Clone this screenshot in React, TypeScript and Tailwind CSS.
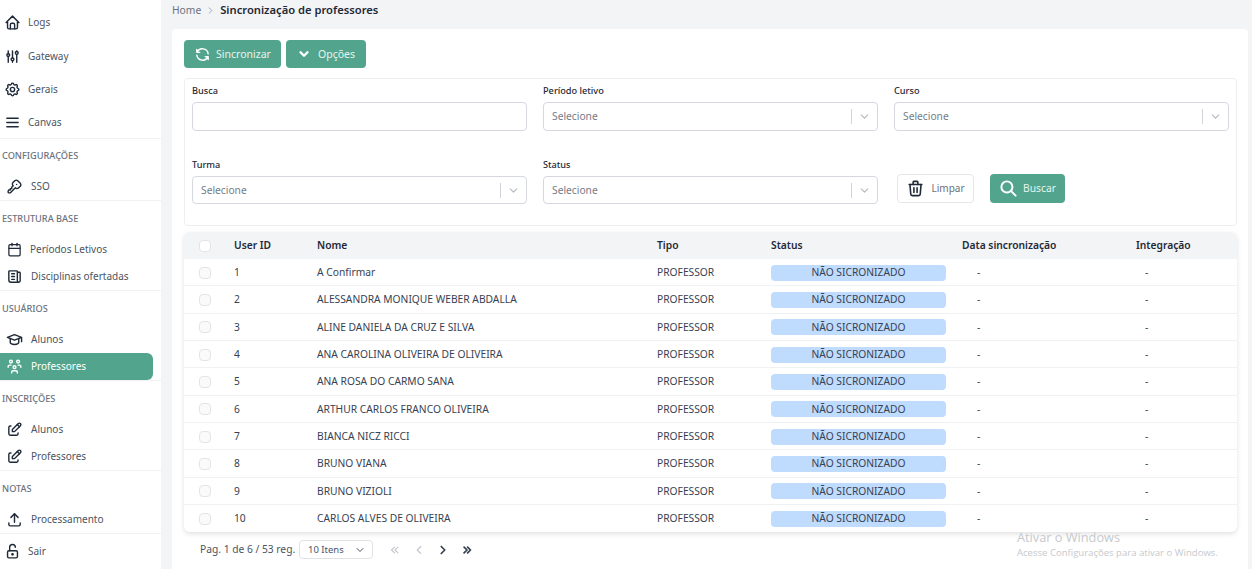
import { ReactNode } from 'react';
import { Calendar } from 'lucide-react';
import {
  TbAdjustments,
  TbChevronDown,
  TbChevronLeft,
  TbChevronRight,
  TbChevronsLeft,
  TbChevronsRight,
  TbEdit,
  TbHome,
  TbKey,
  TbLockOpen,
  TbMenu2,
  TbNews,
  TbRefresh,
  TbSchool,
  TbSearch,
  TbSettings,
  TbTrash,
  TbUpload,
  TbUsersGroup,
} from 'react-icons/tb';

const rows = [
  'A Confirmar',
  'ALESSANDRA MONIQUE WEBER ABDALLA',
  'ALINE DANIELA DA CRUZ E SILVA',
  'ANA CAROLINA OLIVEIRA DE OLIVEIRA',
  'ANA ROSA DO CARMO SANA',
  'ARTHUR CARLOS FRANCO OLIVEIRA',
  'BIANCA NICZ RICCI',
  'BRUNO VIANA',
  'BRUNO VIZIOLI',
  'CARLOS ALVES DE OLIVEIRA',
];

const SideItem = ({ icon, label, active }: { icon: ReactNode; label: string; active?: boolean }) => (
  <div
    className={`flex h-[27px] w-[153px] items-center gap-[8px] rounded-r-md pl-[6px] text-[10px] ${
      active ? 'bg-[#52a58c] text-white' : 'text-[#4b5563]'
    }`}
  >
    <span className={`text-[17px] ${active ? 'text-white' : 'text-[#1f2937]'}`}>{icon}</span>
    {label}
  </div>
);

const TopItem = ({ icon, label, className = 'h-[33.4px]' }: { icon: ReactNode; label: string; className?: string }) => (
  <div className={`flex items-center gap-[7px] pl-[4px] text-[10px] text-[#4b5563] ${className}`}>
    <span className="text-[17px] text-[#1f2937]">{icon}</span>
    {label}
  </div>
);

const Section = ({ title, children, titleH = 'h-[35px]' }: { title: string; children: ReactNode; titleH?: string }) => (
  <div className="border-b border-[#f0f1f3]">
    <div className={`flex ${titleH} items-center pl-[2px] text-[9.2px] font-medium text-[#6b7280]`}>{title}</div>
    {children}
  </div>
);

const Field = ({ label, children, className = '' }: { label: string; children: ReactNode; className?: string }) => (
  <div className={className}>
    <div className="mb-[8px] flex h-[7px] items-center text-[9.2px] font-medium text-[#1f2937]">{label}</div>
    {children}
  </div>
);

const SelectBox = ({ h = 'h-[29px]' }: { h?: string }) => (
  <div className={`flex ${h} items-center rounded border border-[#d5d8de] bg-white pl-[8px] text-[10.25px] text-[#757c88]`}>
    <span className="flex-1 pt-px">Selecione</span>
    <span className="h-[15px] w-px bg-[#d1d5db]" />
    <TbChevronDown className="mx-[6px] text-[13px] text-[#b3b7bf]" />
  </div>
);

const GRID = 'grid grid-cols-[50px_83px_340px_114px_191px_174px_1fr] items-center';

const CheckCell = ({ white }: { white?: boolean }) => (
  <div className="pl-[15px]">
    <div className={`h-[12px] w-[12px] rounded-sm border border-[#e2e4e8] ${white ? 'bg-white' : 'bg-[#fafafa]'}`} />
  </div>
);

export default function App() {
  return (
    <div className="relative flex h-[569px] w-[1252px] overflow-hidden bg-[#f3f4f6] font-['Noto_Sans',sans-serif]">
      <aside className="h-full w-[161px] shrink-0 bg-white">
        <div className="border-b border-[#f0f1f3] pt-[6px]">
          <TopItem icon={<TbHome />} label="Logs" />
          <TopItem icon={<TbAdjustments />} label="Gateway" />
          <TopItem icon={<TbSettings />} label="Gerais" />
          <TopItem icon={<TbMenu2 />} label="Canvas" className="h-[31.8px]" />
        </div>
        <Section title="CONFIGURAÇÕES" titleH="h-[34px]">
          <SideItem icon={<TbKey />} label="SSO" />
        </Section>
        <Section title="ESTRUTURA BASE">
          <SideItem icon={<Calendar size={15} strokeWidth={2} className="ml-px" />} label="Períodos Letivos" />
          <SideItem icon={<TbNews />} label="Disciplinas ofertadas" />
        </Section>
        <Section title="USUÁRIOS">
          <SideItem icon={<TbSchool />} label="Alunos" />
          <SideItem icon={<TbUsersGroup />} label="Professores" active />
        </Section>
        <Section title="INSCRIÇÕES">
          <SideItem icon={<TbEdit />} label="Alunos" />
          <SideItem icon={<TbEdit />} label="Professores" />
        </Section>
        <Section title="NOTAS">
          <SideItem icon={<TbUpload />} label="Processamento" />
        </Section>
        <TopItem icon={<TbLockOpen />} label="Sair" className="h-[35px]" />
      </aside>

      <main className="flex min-w-0 flex-1 flex-col pl-[11px] pr-[4px]">
        <div className="flex h-[29px] shrink-0 items-center gap-[4px] pb-[8px] text-[10.25px] text-[#6b7280]">
          Home
          <TbChevronRight className="text-[11px] text-[#9ca3af]" />
          <span className="text-[11.2px] font-semibold text-[#1f2937]">Sincronização de professores</span>
        </div>

        <div className="flex-1 rounded-t bg-white pl-[12px] pr-[11px] pt-[11px]">
          <div className="flex gap-[5px]">
            <button className="flex h-[28px] w-[97px] items-center justify-center gap-[5px] rounded bg-[#52a58c] text-[10.5px] text-[#e7f4ef]">
              <TbRefresh className="text-[17px] text-white" />
              <span className="pt-px">Sincronizar</span>
            </button>
            <button className="flex h-[28px] w-[80px] items-center justify-center gap-[7px] rounded bg-[#52a58c] text-[10.5px] text-[#e7f4ef]">
              <TbChevronDown className="text-[14px] text-white" strokeWidth={4} />
              <span className="pt-px">Opções</span>
            </button>
          </div>

          <div className="mt-[10px] h-[148px] rounded border border-[#eceef1] pl-[7px] pr-[7px] pt-[8px]">
            <div className="grid grid-cols-3 gap-x-[16px]">
              <Field label="Busca">
                <div className="h-[29px] rounded border border-[#d5d8de] bg-white" />
              </Field>
              <Field label="Período letivo">
                <SelectBox />
              </Field>
              <Field label="Curso">
                <SelectBox />
              </Field>
            </div>
            <div className="mt-[30px] grid grid-cols-3 gap-x-[16px]">
              <Field label="Turma">
                <SelectBox h="h-[28px]" />
              </Field>
              <Field label="Status">
                <SelectBox h="h-[28px]" />
              </Field>
              <div className="flex items-center gap-[16px] pl-[3px] pt-[12px]">
                <button className="flex h-[29px] w-[77px] items-center justify-center gap-[6px] rounded border border-[#e5e7eb] bg-white text-[10px] text-[#6b7280]">
                  <TbTrash className="text-[19px] text-[#1f2937]" />
                  Limpar
                </button>
                <button className="flex h-[29px] w-[75px] items-center justify-center gap-[5px] rounded bg-[#52a58c] text-[10.25px] text-[#e7f4ef]">
                  <TbSearch className="text-[19px] text-white" strokeWidth={2.5} />
                  Buscar
                </button>
              </div>
            </div>
          </div>

          <div className="mt-[6px] rounded-md bg-white shadow-[0_2px_5px_rgba(0,0,0,0.12)]">
            <div className={`${GRID} h-[27px] rounded-t-md bg-[#f3f4f6] text-[10.25px] font-semibold text-[#1f2937]`}>
              <CheckCell white />
              <div>User ID</div>
              <div>Nome</div>
              <div>Tipo</div>
              <div>Status</div>
              <div>Data sincronização</div>
              <div>Integração</div>
            </div>
            {rows.map((nome, i) => (
              <div
                key={nome}
                className={`${GRID} h-[27.33px] pt-px text-[10.25px] text-[#374151] ${i < 9 ? 'border-b border-[#f0f1f3]' : ''}`}
              >
                <CheckCell />
                <div>{i + 1}</div>
                <div>{nome}</div>
                <div>PROFESSOR</div>
                <div className="flex h-[16px] w-[175px] items-center justify-center rounded bg-[#bfdbfe]">NÃO SICRONIZADO</div>
                <div className="pl-[15px]">-</div>
                <div className="pl-[9px]">-</div>
              </div>
            ))}
          </div>

          <div className="mt-[8px] flex items-center pl-[16px] text-[10.25px] text-[#4b5563]">
            <span className="w-[94px] whitespace-nowrap">Pag. 1 de 6 / 53 reg.</span>
            <div className="ml-[5px] flex h-[19px] w-[74px] items-center justify-between rounded border border-[#e0e2e6] pl-[8px] pr-[6px] text-[9.5px]">
              10 Itens
              <TbChevronDown className="text-[12px]" />
            </div>
            <div className="ml-[15px] flex items-center gap-[10px] text-[14px]">
              <TbChevronsLeft className="text-[#c4c7cd]" />
              <TbChevronLeft className="text-[#c4c7cd]" />
              <TbChevronRight className="text-[#374151]" strokeWidth={3} />
              <TbChevronsRight className="text-[#374151]" strokeWidth={3} />
            </div>
          </div>
        </div>
      </main>

      <div className="absolute left-[1017px] top-[530px] font-['Open_Sans',sans-serif] text-[#c6c9cd]">
        <div className="text-[12.75px] leading-[15px]">Ativar o Windows</div>
        <div className="text-[9.55px] leading-[15px]">Acesse Configurações para ativar o Windows.</div>
      </div>
    </div>
  );
}
